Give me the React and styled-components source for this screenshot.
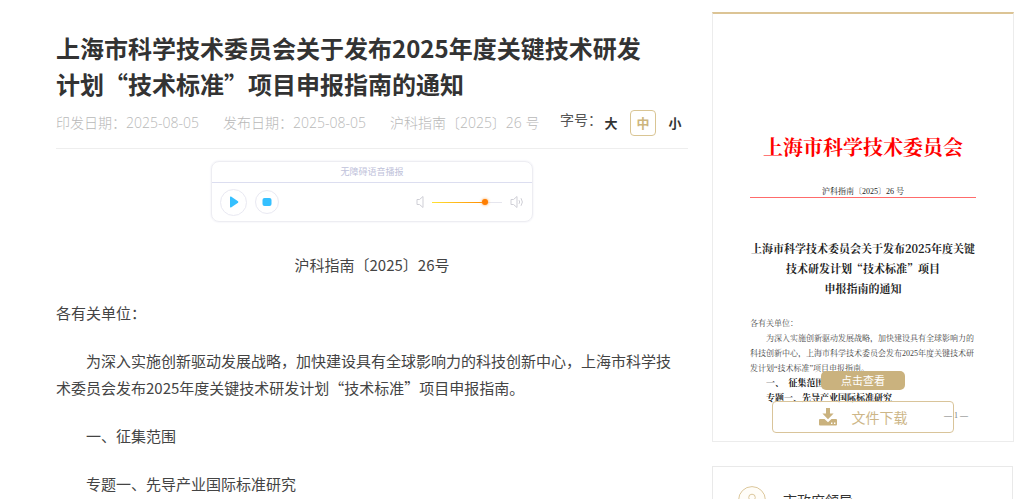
import { useState } from "react";
import styled, { createGlobalStyle } from "styled-components";

const GlobalStyle = createGlobalStyle`
    * {
        box-sizing: border-box;
    }

    body {
        margin: 0;
        background-color: #ffffff;
        color: #333333;
        font-family: "Noto Sans CJK SC", sans-serif;
    }

    h1, h2, p {
        margin: 0;
    }

    button {
        padding: 0;
        border: none;
        background: none;
        font-family: inherit;
        cursor: pointer;
    }
`;

const PageContainer = styled.div`
    width: 100%;
    height: 100vh;
    overflow: hidden;

    padding-left: 56px;
    padding-right: 10px;

    display: grid;
    grid-template-columns: minmax(0, 1fr) 302px;
    gap: 24px;
    align-items: start;
`;

const Article = styled.main`
    padding-top: 30px;
`;

const ArticleTitle = styled.h1`
    padding-right: 40px;

    font-size: 24px;
    line-height: 36px;
    font-weight: 700;
`;

const MetaRow = styled.div`
    height: 47px;
    padding-bottom: 4px;

    display: flex;
    flex-direction: row;
    align-items: center;
    justify-content: space-between;

    border-bottom: 1px solid #eeeeee;
`;

const MetaList = styled.div`
    display: flex;
    gap: 24px;

    font-family: "Open Sans", "Noto Sans CJK SC", sans-serif;
    font-size: 14px;
    font-weight: 300;
    line-height: 20px;
    color: #b8b8b8;
    white-space: nowrap;
`;

const FontSizeGroup = styled.div`
    padding-right: 4px;

    display: flex;
    align-items: center;
`;

const FontSizeLabel = styled.span`
    padding-bottom: 8px;

    font-size: 14px;
    line-height: 20px;
    color: #555555;
    white-space: nowrap;
`;

const FontSizeOptions = styled.div`
    display: flex;
    align-items: center;
    gap: 10px;
`;

const FontSizeButton = styled.button`
    width: ${(props) => (props.$active ? 26 : 18)}px;
    height: 26px;

    border: 1px solid ${(props) => (props.$active ? "#d9c594" : "transparent")};
    border-radius: 4px;

    font-size: 13px;
    line-height: 20px;
    font-weight: 700;
    color: ${(props) => (props.$active ? "#cdb57d" : "#333333")};
`;

const Player = styled.section`
    width: 322px;
    margin: 12px auto 29px;

    border: 1px solid #ededf2;
    border-radius: 8px;
    box-shadow: 0 0 2px #e6e6f0;
`;

const PlayerTitle = styled.div`
    height: 21px;

    border-bottom: 1px solid #dcdef0;

    font-size: 9px;
    line-height: 20px;
    color: #c0c2da;
    text-align: center;
`;

const PlayerControls = styled.div`
    height: 38px;
    padding: 0 8px;

    display: flex;
    align-items: center;
    gap: 8px;
`;

const RoundButton = styled.button`
    width: ${(props) => props.$size}px;
    height: ${(props) => props.$size}px;

    display: flex;
    align-items: center;
    justify-content: center;

    border: 1px solid #e9e9f2;
    border-radius: 50%;
`;

const VolumeGroup = styled.div`
    margin-left: auto;

    display: flex;
    align-items: center;
    gap: 8px;
`;

const VolumeSlider = styled.input`
    width: 70px;
    height: 12px;
    margin: 0;

    appearance: none;
    background: transparent;

    &::-webkit-slider-runnable-track {
        height: 1px;
        background: linear-gradient(90deg, #ffe234 0%, #ff8a00 76%, #e6e6ee 76%);
    }

    &::-webkit-slider-thumb {
        appearance: none;
        width: 6px;
        height: 6px;
        margin-top: -3px;
        border-radius: 50%;
        background-color: #ff7e00;
        box-shadow: 0 0 3px #ff9c3c;
    }
`;

const ArticleBody = styled.div`
    display: flex;
    flex-direction: column;
    gap: 21px;

    font-size: 15px;
    line-height: 27px;
    color: #444444;
`;

const Paragraph = styled.p`
    padding-right: ${(props) => (props.$indent ? "8px" : "0")};

    text-indent: ${(props) => (props.$indent ? "2em" : "0")};
    text-align: ${(props) => props.$align || "left"};
`;

const Sidebar = styled.aside`
    padding-top: 12px;

    display: flex;
    flex-direction: column;
    gap: 24px;
`;

const DocumentCard = styled.section`
    position: relative;
    height: 430px;
    padding: 120px 37px 0;

    border: 1px solid #ececec;
    border-top: 2px solid #dcc495;

    font-family: "Liberation Serif", "Noto Serif CJK SC", "Noto Sans CJK SC", serif;
    color: #222222;
    white-space: nowrap;
`;

const DocumentIssuer = styled.div`
    font-size: 20px;
    line-height: 28px;
    font-weight: 700;
    color: #ff0000;
    text-align: center;
`;

const DocumentNumber = styled.div`
    padding-top: 24px;

    border-bottom: 1px solid #ff6b6b;

    font-size: 8px;
    line-height: 11px;
    text-align: center;
`;

const DocumentTitle = styled.h2`
    padding-top: 40px;
    margin: 0 -8px;

    font-family: "Noto Serif CJK SC", "Liberation Serif", serif;
    font-size: 11px;
    line-height: 20px;
    font-weight: 700;
    text-align: center;
`;

const DocumentText = styled.div`
    padding-top: 18px;

    font-size: 8px;
    line-height: 15px;
    color: #444444;
`;

const DocumentLine = styled.p`
    padding-left: ${(props) => (props.$indent ? "16px" : "0")};
`;

const DocumentHeading = styled.h3`
    margin: 0;
    padding-left: 16px;

    font-size: 9px;
    line-height: 15px;
    font-weight: 700;
    color: #222222;
`;

const DocumentPage = styled.div`
    padding-right: 8px;
    margin-top: 2px;

    font-size: 8px;
    line-height: 15px;
    color: #777777;
    text-align: right;
`;

const ViewButton = styled.button`
    position: absolute;
    left: 50%;
    bottom: 51px;
    transform: translateX(-50%);
    width: 84px;
    height: 19px;

    border-radius: 5px;
    background-color: #cab27e;

    font-family: "Noto Sans CJK SC", sans-serif;
    font-size: 11px;
    line-height: 19px;
    color: #ffffff;
`;

const DownloadLink = styled.a`
    position: absolute;
    left: 50%;
    bottom: 8px;
    transform: translateX(-50%);
    width: 182px;
    height: 32px;

    display: flex;
    align-items: center;
    justify-content: center;
    gap: 15px;

    border: 1px solid #d9c49a;
    border-radius: 4px;

    font-family: "Noto Sans CJK SC", sans-serif;
    font-size: 14px;
    line-height: 30px;
    color: #cdb687;
    text-decoration: none;
`;

const LeaderCard = styled.section`
    margin-right: 1px;
    padding: 19px 25px;

    display: flex;
    align-items: center;
    gap: 17px;

    border: 1px solid #e9e9e9;
`;

const LeaderLink = styled.a`
    font-size: 14px;
    line-height: 24px;
    color: #333333;
    text-decoration: none;
`;

function SpeakerIcon({ loud }) {
    return (
        <svg
            width={loud ? 14 : 8}
            height="14"
            viewBox={loud ? "0 0 14 14" : "0 0 8 14"}
            fill="none"
            stroke="#cfcfd6"
            strokeLinejoin="round"
        >
            <path d="M1 4.5h2.5L7 1.5v11L3.5 9.5H1z" />
            {loud && <path d="M9 5.2q1.4 1.8 0 3.6M11 3.2q2.8 3.8 0 7.6" />}
        </svg>
    );
}

function DownloadIcon() {
    return (
        <svg width="18" height="18" viewBox="0 0 18 18" fill="#cab27e">
            <path d="M7 0h4v5.5h3.6L9 11.2 3.4 5.5H7z" />
            <path
                fillRule="evenodd"
                d="M1 11h4.5L9 14.2l3.5-3.2H17q1 0 1 1v4.5q0 1-1 1H1q-1 0-1-1V12q0-1 1-1zM12 14.6v1.4h1.4v-1.4zM15 14.6v1.4h1.4v-1.4z"
            />
        </svg>
    );
}

function LeaderIcon() {
    return (
        <svg width="28" height="28" viewBox="0 0 28 28" fill="none" stroke="#dcc79c">
            <circle cx="14" cy="14" r="13.4" fill="#fffdf8" />
            <circle cx="14" cy="11.5" r="3.3" />
            <path d="M7.5 21q0-5 6.5-5t6.5 5z" />
        </svg>
    );
}

const FONT_SIZES = ["大", "中", "小"];

function App() {
    const [fontSize, setFontSize] = useState("中");

    return (
        <>
            <GlobalStyle />
            <PageContainer lang="zh-CN">
                <Article>
                    <ArticleTitle>
                        上海市科学技术委员会关于发布2025年度关键技术研发计划“技术标准”项目申报指南的通知
                    </ArticleTitle>
                    <MetaRow>
                        <MetaList>
                            <span>印发日期：2025-08-05</span>
                            <span>发布日期：2025-08-05</span>
                            <span>沪科指南〔2025〕26 号</span>
                        </MetaList>
                        <FontSizeGroup role="group" aria-labelledby="font-size-label">
                            <FontSizeLabel id="font-size-label">字号：</FontSizeLabel>
                            <FontSizeOptions>
                                {FONT_SIZES.map((size) => (
                                    <FontSizeButton
                                        key={size}
                                        $active={size === fontSize}
                                        onClick={() => setFontSize(size)}
                                    >
                                        {size}
                                    </FontSizeButton>
                                ))}
                            </FontSizeOptions>
                        </FontSizeGroup>
                    </MetaRow>

                    <Player>
                        <PlayerTitle>无障碍语音播报</PlayerTitle>
                        <PlayerControls>
                            <RoundButton $size={27} aria-label="播放">
                                <svg width="10" height="12" viewBox="0 0 10 12" fill="#35c0ff">
                                    <path d="M1 1.2q0-1 1-.6l7 4.6q.8.8 0 1.6l-7 4.6q-1 .4-1-.6z" />
                                </svg>
                            </RoundButton>
                            <RoundButton $size={24} aria-label="停止">
                                <svg width="10" height="8" viewBox="0 0 10 8" fill="#35c0ff">
                                    <rect width="9" height="8" rx="2" x=".5" />
                                </svg>
                            </RoundButton>
                            <VolumeGroup>
                                <SpeakerIcon />
                                <VolumeSlider
                                    type="range"
                                    aria-label="音量"
                                    min="0"
                                    max="100"
                                    defaultValue="78"
                                />
                                <SpeakerIcon loud />
                            </VolumeGroup>
                        </PlayerControls>
                    </Player>

                    <ArticleBody>
                        <Paragraph $align="center">沪科指南〔2025〕26号</Paragraph>
                        <Paragraph>各有关单位：</Paragraph>
                        <Paragraph $indent>
                            为深入实施创新驱动发展战略，加快建设具有全球影响力的科技创新中心，上海市科学技术委员会发布2025年度关键技术研发计划“技术标准”项目申报指南。
                        </Paragraph>
                        <Paragraph $indent>一、征集范围</Paragraph>
                        <Paragraph $indent>专题一、先导产业国际标准研究</Paragraph>
                    </ArticleBody>
                </Article>

                <Sidebar>
                    <DocumentCard>
                        <DocumentIssuer>上海市科学技术委员会</DocumentIssuer>
                        <DocumentNumber>沪科指南〔2025〕26 号</DocumentNumber>
                        <DocumentTitle>
                            上海市科学技术委员会关于发布2025年度关键
                            <br />
                            技术研发计划“技术标准”项目
                            <br />
                            申报指南的通知
                        </DocumentTitle>
                        <DocumentText>
                            <DocumentLine>各有关单位：</DocumentLine>
                            <DocumentLine $indent>
                                为深入实施创新驱动发展战略，加快建设具有全球影响力的
                            </DocumentLine>
                            <DocumentLine>
                                科技创新中心，上海市科学技术委员会发布2025年度关键技术研
                            </DocumentLine>
                            <DocumentLine>发计划“技术标准”项目申报指南。</DocumentLine>
                            <DocumentHeading>一、　征集范围</DocumentHeading>
                            <DocumentHeading>专题一、先导产业国际标准研究</DocumentHeading>
                        </DocumentText>
                        <DocumentPage>— 1 —</DocumentPage>
                        <ViewButton>点击查看</ViewButton>
                        <DownloadLink href="#download">
                            <DownloadIcon />
                            文件下载
                        </DownloadLink>
                    </DocumentCard>

                    <LeaderCard>
                        <LeaderIcon />
                        <LeaderLink href="#leaders">市政府领导</LeaderLink>
                    </LeaderCard>
                </Sidebar>
            </PageContainer>
        </>
    );
}

export default App;
